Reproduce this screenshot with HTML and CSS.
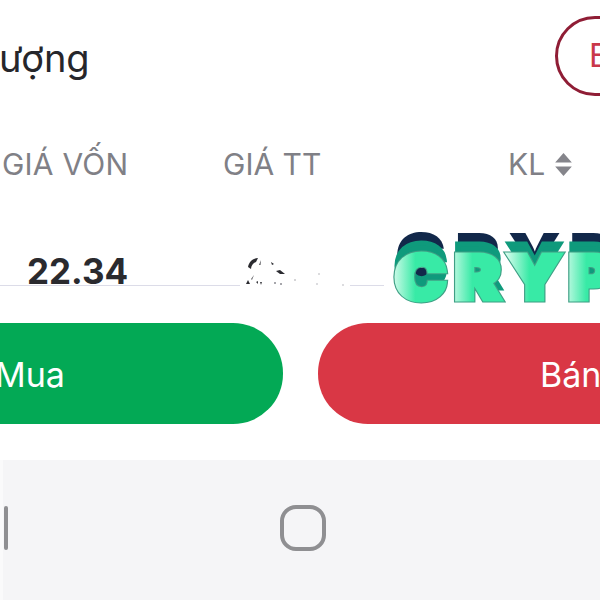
FILE: index.html
```html
<!DOCTYPE html>
<html lang="vi">
<head>
<meta charset="UTF-8" />
<meta name="viewport" content="width=device-width, initial-scale=1" />
<title>Danh mục</title>
<link rel="stylesheet" href="styles.css">
</head>
<body>
  <div class="screen">
    <div class="top-row">
      <span class="top-title">ượng</span>
      <span class="top-pill">Bán</span>
    </div>

    <div class="head-row">
      <span class="col col-cost">GIÁ VỐN</span>
      <span class="col col-price">GIÁ TT</span>
      <span class="col col-qty">
        KL
        <svg class="sort-icon" width="19" height="25" viewBox="0 0 18 24" aria-hidden="true">
          <path d="M9 1 L17 10 H1 Z M1 14 H17 L9 23 Z" fill="#85858b"/>
        </svg>
      </span>
    </div>

    <div class="data-row">
      <span class="cost-value">22.34</span>
      <svg class="specks" width="110" height="45" viewBox="0 0 110 45" aria-hidden="true">
        <path d="M8 17 C9 11 14 8 18 8 L16 12 C13 13 11 16 11 19 Z" fill="#2b2b30"/>
        <path d="M19 15 L21 10 L20.500 15 Z" fill="#55555a"/>
        <path d="M31 12 L34 14 L32 15 Z" fill="#2b2b30"/>
        <path d="M36 21 L40 20 L45 24 L40 24 Z" fill="#2b2b30"/>
        <path d="M6 34 L8 30 L10 34 Z" fill="#2b2b30"/>
        <path d="M11 29 L14 25 L12 30 Z" fill="#66666b"/>
        <path d="M16 32 L18 31 L18 34 Z" fill="#3c3c41"/>
        <path d="M20 32 L22 32 L21 35 Z" fill="#3c3c41"/>
        <circle cx="35" cy="33" r="1" fill="#8a8a90"/>
        <circle cx="41" cy="34" r="1" fill="#8a8a90"/>
        <circle cx="55" cy="30" r="0.800" fill="#a0a0a5"/>
        <circle cx="79" cy="24" r="0.800" fill="#b0b0b5"/>
        <circle cx="77" cy="34" r="1" fill="#d0d0d5"/>
        <circle cx="103" cy="35" r="1" fill="#d0d0d5"/>
      </svg>
      <div class="crypto" aria-label="CRYPTO">
        <span class="crypto-letter" data-l="C"><i>C</i></span>
        <span class="crypto-letter" data-l="R"><i>R</i></span>
        <span class="crypto-letter" data-l="Y"><i>Y</i></span>
        <span class="crypto-letter" data-l="P"><i>P</i></span>
      </div>
    </div>

    <div class="actions">
      <button class="action action-buy">Mua</button>
      <button class="action action-sell">Bán</button>
    </div>

    <div class="nav-bar">
      <span class="nav-recent"></span>
      <span class="nav-home"></span>
    </div>
  </div>
</body>
</html>
```

FILE: styles.css
```css
* {
  box-sizing: border-box;
}

html, body {
  margin: 0;
  padding: 0;
  background: #fff;
}

.screen {
  width: 600px;
  height: 600px;
  overflow: hidden;
  display: flex;
  flex-direction: column;
  font-family: Inter, "Liberation Sans", sans-serif;
}

/* Top row */
.top-row {
  height: 111px;
  display: flex;
  align-items: center;
  justify-content: space-between;
}

.top-title {
  font-size: 38px;
  margin-top: 4px;
  margin-left: -1px;
  color: #26262b;
}

.top-pill {
  width: 150px;
  height: 80px;
  margin-right: -105px;
  padding-left: 31px;
  border: 3px solid #8f1d35;
  border-radius: 40px;
  color: #c9374a;
  font-size: 32px;
  display: flex;
  align-items: center;
  flex-shrink: 0;
}

/* Table header */
.head-row {
  height: 102px;
  display: flex;
  align-items: flex-start;
  padding-top: 35px;
  color: #808086;
  font-size: 30px;
}

.col-cost {
  width: 223px;
  padding-left: 2px;
  letter-spacing: 0.2px;
}

.col-price {
  width: 285px;
}

.col-qty {
  display: flex;
  align-items: center;
  gap: 9px;
}

/* Data row */
.data-row {
  position: relative;
  height: 110px;
}

.data-row::after {
  content: "";
  position: absolute;
  left: 0;
  top: 72px;
  width: 384px;
  height: 1px;
  background: #dcdce8;
}

.cost-value {
  position: absolute;
  left: 27px;
  top: 36px;
  z-index: 1;
  font-size: 35px;
  font-weight: 700;
  color: #2a2a2e;
  line-height: 44px;
}

.specks {
  position: absolute;
  left: 240px;
  top: 37px;
  z-index: 1;
  background: #fff;
}

/* Logo laid over the table, three offset copies of each letter */
.crypto {
  position: absolute;
  left: 392px;
  top: 24px;
  z-index: 2;
  display: flex;
  font-family: Inter, sans-serif;
  font-weight: 900;
  font-size: 60px;
  line-height: 80px;
  height: 80px;
  white-space: nowrap;
}

.crypto-letter {
  position: relative;
  display: block;
  width: 57px;
  height: 80px;
  text-align: center;
  transform: scaleX(1.14);
}

.crypto-letter::before,
.crypto-letter::after {
  content: attr(data-l);
  position: absolute;
  left: 0;
  top: 0;
  width: 100%;
}

.crypto-letter::before {
  z-index: 1;
  color: #0f9a7c;
  -webkit-text-stroke: 5px #0f9a7c;
  top: -11px;
  text-shadow: 0 -11px 0 #12284a;
}

.crypto-letter::after {
  z-index: 2;
  color: #3f9f85;
  -webkit-text-stroke: 7px #3f9f85;
}

.crypto-letter i {
  position: relative;
  z-index: 3;
  display: block;
  font-style: normal;
  color: transparent;
  -webkit-text-stroke: 5px transparent;
  background: linear-gradient(90deg, #e2fdf2 4%, #38eaa6 42%);
  background-clip: text;
  -webkit-background-clip: text;
}

/* Buy / sell */
.actions {
  display: flex;
  gap: 35px;
  margin-left: -100px;
  height: 101px;
}

.action {
  border: none;
  width: 383px;
  flex-shrink: 0;
  color: #fff;
  font-family: inherit;
  font-size: 34px;
  border-radius: 50px;
  padding: 2px 0 0;
}

.action-buy {
  background: #03a955;
  text-align: left;
  padding-left: 95px;
}

.action-sell {
  background: #d93745;
  padding-left: 222px;
  text-align: left;
}

/* Android nav bar */
.nav-bar {
  margin-top: 36px;
  height: 140px;
  background: #f5f5f7;
  border-left: 3px solid #fafafb;
  display: flex;
  align-items: center;
  padding-bottom: 4px;
}

.nav-recent {
  width: 4px;
  height: 44px;
  margin-left: 1px;
  border-radius: 2px;
  background: #8f8f92;
}

.nav-home {
  width: 46px;
  height: 46px;
  margin-left: 272px;
  border: 4px solid #8f8f92;
  border-radius: 16px;
}
```
